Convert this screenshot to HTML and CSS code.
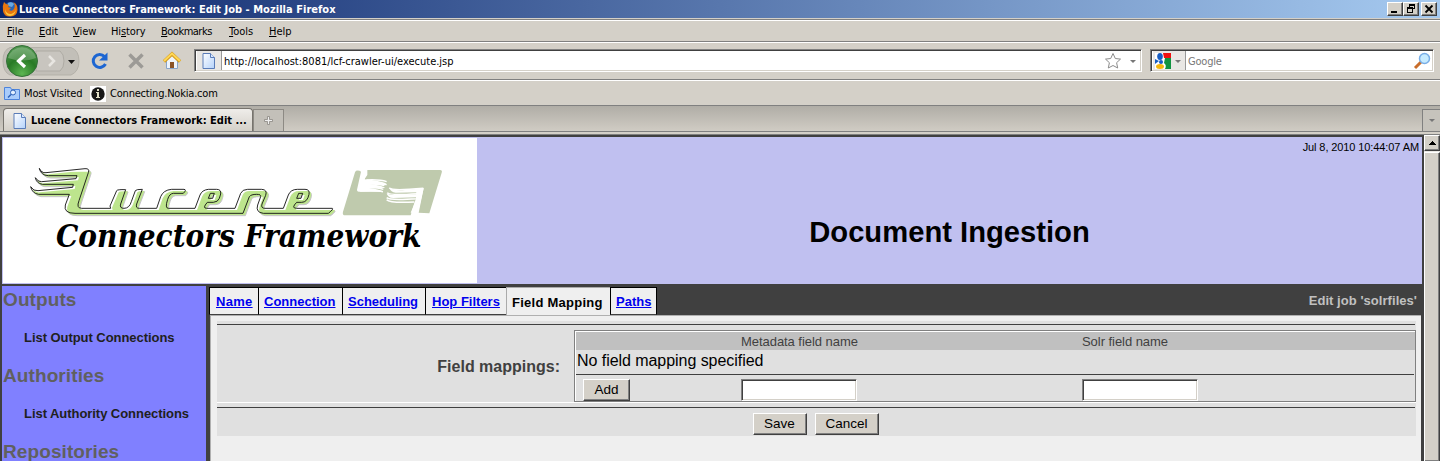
FILE: index.html
```html
<!DOCTYPE html>
<html lang="en">
<head>
<meta charset="utf-8">
<title>Lucene Connectors Framework: Edit Job</title>
<link rel="stylesheet" href="styles.css">
</head>
<body>
<svg width="0" height="0" class="defs">
  <defs>
    <linearGradient id="sheet" x1="0" y1="0" x2="1" y2="1"><stop offset="0" stop-color="#fff"/><stop offset="1" stop-color="#b4d2fa"/></linearGradient>
    <radialGradient id="green" cx=".5" cy=".9" r=".8"><stop offset="0" stop-color="#5cb552"/><stop offset=".6" stop-color="#287a25"/><stop offset="1" stop-color="#4c944a"/></radialGradient>
    <symbol id="page" viewBox="0 0 14 16"><path d="M1 .5h7.500l4 4v11H1z" fill="url(#sheet)" stroke="#5a7cb8"/><path d="M8.500 .5v4h4" fill="#dceaff" stroke="#5a7cb8"/></symbol>
  </defs>
</svg>
<header class="titlebar">
  <svg class="fox" width="16" height="16" viewBox="0 0 16 16"><circle cx="8.500" cy="7.500" r="6.500" fill="#2866b8"/><path d="M6 2q4-2 6 1l-2 3-4-1z" fill="#67a9e4"/><path d="M2 1l2 2 3 1-1 2 3 1-2 2q3 2 5-1 2-4-1-7 5 2 4.500 8T8.500 15.500 1 10Q0 5 2 1z" fill="#e8760e"/><path d="M3 8q1 5 6 5 4-1 5-5-1 7-6 7T3 8z" fill="#fbc53c"/></svg>
  <span class="title-text">Lucene Connectors Framework: Edit Job - Mozilla Firefox</span>
  <div class="winbtns">
    <i><svg width="13" height="11"><path d="M3 8h6v2H3z"/></svg></i>
    <i><svg width="13" height="11"><path d="M5 1h6v5H9V5h1V3H6v1H5zM3 4h6v6H3zM4 6v3h4V6z" fill-rule="evenodd"/></svg></i>
    <i class="close"><svg width="13" height="12"><path d="M3.500 2.500l7 7m0-7l-7 7" stroke="#000" stroke-width="1.800"/></svg></i>
  </div>
</header>
<nav class="menu"><span><u>F</u>ile</span><span class="m2"><u>E</u>dit</span><span class="m3"><u>V</u>iew</span><span class="m4">Hi<u>s</u>tory</span><span class="m5"><u>B</u>ookmarks</span><span class="m6"><u>T</u>ools</span><span><u>H</u>elp</span></nav>
<div class="navbar">
  <svg class="navicons" width="194" height="36" viewBox="0 0 194 36">
    <path d="M10 4.500h61q8 3 8 13.500t-8 14H10Q3 29 3 18t7-13.500z" fill="#c2bfb8" stroke="#b4b1a9"/>
    <path d="M36 8h24q4 3 4 10t-4 10H36z" fill="#c8c5bf" stroke="#aeaba4"/>
    <circle cx="22" cy="18" r="15.500" fill="url(#green)" stroke="#35713a"/>
    <path d="M8 15a14.500 14.500 0 0 1 28 0q-13 5-28 0z" fill="#fff" opacity=".22"/>
    <path d="M25 12l-6.500 6 6.500 6" fill="none" stroke="#fff" stroke-width="3.200"/>
    <path d="M49 13l5 5-5 5" fill="none" stroke="#e8e6e2" stroke-width="2.500"/>
    <path d="M68 17h7l-3.500 4z" fill="#111"/>
    <path d="M104.500 13.500a6.500 6.500 0 1 0 1 7.500" fill="none" stroke="#1d66d2" stroke-width="3"/><path d="M107.500 9.500v8H99z" fill="#1d66d2"/>
    <path d="M129.500 11.500l13 13m0-13l-13 13" stroke="#9c9a96" stroke-width="3.500"/>
    <path d="M166.500 17v8.500h11V17L172 12z" fill="#eef4fb" stroke="#87a4ca"/><path d="M164 18.500l8-7.500 8 7.500" fill="none" stroke="#d29a22" stroke-width="3.500"/><path d="M164 18l8-7.500 8 7.500" fill="none" stroke="#ffd756" stroke-width="2"/><path d="M170 19h4v6h-4z" fill="#8b5427"/>
  </svg>
  <div class="field url"><span class="slot"><svg width="14" height="16"><use href="#page"/></svg></span><span class="addr">http://localhost:8081/lcf-crawler-ui/execute.jsp</span>
    <svg class="star" width="34" height="18"><path d="M9 1.500l2.300 5 5.200.6-3.900 3.600 1.100 5.300L9 13.500 4.300 16l1.100-5.300L1.500 7.100l5.200-.6z" fill="#fff" stroke="#8c8c8c"/><path d="M26 8h6l-3 3z" fill="#777"/></svg></div>
  <div class="field search"><span class="slot engine"><svg width="30" height="18"><path d="M2 1h16v16H2z" fill="#fff"/><path d="M10 1h8v5h-7z" fill="#ef1010"/><path d="M18 6v11h-6q2-4-1-6l1-5z" fill="#109340"/><ellipse cx="7" cy="4.500" rx="2.800" ry="3.500" fill="#155cc3"/><path d="M2 7l4 2-4 3z" fill="#155cc3"/><circle cx="8" cy="10" r="2" fill="#155cc3"/><ellipse cx="7" cy="14.500" rx="4" ry="2.500" fill="#f6b70c"/><path d="M22 8h6l-3 3z" fill="#777"/></svg></span><span class="hint">Google</span>
    <svg class="lens" width="18" height="18"><path d="M2 16l6-6" stroke="#c96d2b" stroke-width="3"/><circle cx="11.500" cy="6.500" r="5" fill="#c6ebff" stroke="#79aee6" stroke-width="1.500"/></svg></div>
</div>
<div class="bookmarks">
  <svg width="16" height="16"><path d="M.5 1.500h6l1 2h8v10H.5z" fill="#a9ccfb" stroke="#4e84da"/><circle cx="9" cy="6.500" r="2.500" fill="#e4f1ff" stroke="#2d61b8"/><path d="M7 8.500l-3 3" stroke="#2d61b8" stroke-width="1.500"/></svg>
  <span class="mv">Most Visited</span>
  <svg width="16" height="16"><path d="M0 0h16v16H0z" fill="#fff"/><circle cx="8" cy="8" r="6.700" fill="#181818"/><path d="M7 3h2v2H7zM6 6h3v5h1v1H6V11h1V7H6z" fill="#e2e0c8"/></svg>
  <span class="nk">Connecting.Nokia.com</span>
</div>
<div class="tabstrip">
  <div class="tab"><svg width="14" height="16"><use href="#page"/></svg><span>Lucene Connectors Framework: Edit ...</span></div>
  <div class="newtab"><svg width="11" height="11"><path d="M4.500 1.500h2v3h3v2h-3v3h-2v-3h-3v-2h3z" fill="#eee" stroke="#8a8781" stroke-width=".8"/></svg></div>
  <div class="alltabs"><svg width="8" height="5"><path d="M1 1h6L4 4z" fill="#777"/></svg></div>
</div>
<div class="viewport">
  <main class="page">
    <div class="banner">
      <div class="logo">
        <svg width="474" height="145" viewBox="9 24 1422 435">
          <defs><path id="word" fill-rule="evenodd" d="M118 115Q124 130 138 128L255 116Q270 115 265 128L237 212Q228 235 245 235H332L330 228L350 182Q352 178 377 179L362 222Q358 235 372 235Q388 235 394 215L406 182Q408 178 427 178L410 222Q406 235 418 235H470L482 200Q490 180 515 178H552Q561 179 550 190H520Q508 191 503 208Q494 235 505 235H585L600 195Q606 180 625 178H650Q664 178 662 192L658 205Q654 216 640 217H622Q606 235 620 235H705L722 190Q727 178 743 178H785Q803 179 797 196L786 222Q782 235 795 235H850L865 195Q872 178 892 178H915Q930 178 927 193Q922 217 905 217H890Q872 235 890 235H997Q1002 237 985 250H790Q766 247 773 225L782 200Q784 193 770 193Q753 193 748 200L729 250H225Q190 250 196 225L208 193H116Q96 190 92 170Q100 184 114 182L218 172L220 163H127Q109 160 106 143Q115 157 125 155L228 146L231 137H145Q122 136 118 115zM625 205L631 190H643L638 205zM890 205L896 190H908L903 205z"/>
          <clipPath id="lower"><path d="M80 125H1010V270H80z"/></clipPath></defs>
          <use href="#word" x="7" y="7" fill="#c6c6c6" stroke="#c6c6c6" stroke-width="3"/>
          <use href="#word" fill="#fff"/>
          <g clip-path="url(#lower)"><use href="#word" x="6" y="5" fill="#bde58d"/></g>
          <use href="#word" fill="none" stroke="#111" stroke-width="2.700"/>
          <path d="M1068 122Q1078 120 1083 125L1072 175Q1068 187 1080 185L1150 185Q1140 177 1102 173L1155 174Q1148 165 1096 162L1160 166Q1166 155 1093 148L1102 135V120H1320Q1328 120 1325 128L1288 250L1256 248L1271 175L1215 180Q1178 183 1168 172Q1173 190 1190 188L1253 187L1252 193L1185 195Q1165 195 1160 188Q1162 203 1180 204L1250 202L1243 219L1232 256H1036Q1026 256 1029 245L1065 127z" fill="#bfcaad"/>
          <path d="M1099 120L1083 183Q1130 181 1149 185M1099 150Q1140 148 1160 155M1097 163Q1135 160 1153 167M1093 173Q1130 171 1150 178M1168 174Q1175 183 1270 175M1162 188Q1168 197 1252 191M1160 203Q1170 212 1250 206L1262 177M1160 209Q1170 220 1243 216" fill="none" stroke="#fff" stroke-width="4.500"/>
          <path d="M1249 176L1271 175L1254 248H1232L1248 210z" fill="#fff"/>
          <text x="168" y="352" class="logo-text" textLength="1096" lengthAdjust="spacingAndGlyphs">Connectors Framework</text>
        </svg>
      </div>
      <div class="heading"><time>Jul 8, 2010 10:44:07 AM</time><h1>Document Ingestion</h1></div>
    </div>
    <div class="columns">
      <aside>
        <h2 class="o">Outputs</h2><a class="lo">List Output Connections</a>
        <h2 class="a">Authorities</h2><a class="la">List Authority Connections</a>
        <h2 class="r">Repositories</h2>
      </aside>
      <section>
        <div class="jobtabs">
          <a class="t1"><span>Name</span></a><a class="t2"><span>Connection</span></a><a class="t3"><span>Scheduling</span></a><a class="t4"><span>Hop Filters</span></a><b class="t5"><span>Field Mapping</span></b><a class="t6"><span>Paths</span></a>
          <span class="jobname">Edit job 'solrfiles'</span>
        </div>
        <div class="form">
          <div class="rule"></div>
          <div class="row">
            <label>Field mappings:</label>
            <div class="mapping">
              <div class="mhead"><span class="c2">Metadata field name</span><span class="c3">Solr field name</span></div>
              <div class="none"><span>No field mapping specified</span></div>
              <div class="mline"></div>
              <div class="madd"><button class="add">Add</button><input class="i2"><input class="i3"></div>
            </div>
          </div>
          <div class="actions"><div class="rule"></div><div class="btns"><button class="save">Save</button><button class="cancel">Cancel</button></div></div>
        </div>
      </section>
    </div>
  </main>
  <div class="scroll"><div class="up"><svg width="7" height="4"><path d="M3 0h1v1h1v1h1v1h1v1H0V3h1V2h1V1h1z"/></svg></div><div class="thumb"></div></div>
</div>
</body>
</html>
```
FILE: styles.css
```css
*{box-sizing:border-box}
body{margin:0;width:1440px;height:461px;overflow:hidden;background:#d4d0c8;font:11px/14px "DejaVu Sans Condensed","DejaVu Sans",sans-serif;font-stretch:condensed;color:#000;display:flex;flex-direction:column}
.defs{position:absolute}
svg{display:block;flex:none}
span,time,h1,h2,label,button{white-space:nowrap}
.titlebar{height:18px;flex:none;background:linear-gradient(90deg,#0a246a,#a6caf0);display:flex;align-items:center;padding:0 3px 0 2px}
.title-text{color:#fff;font-weight:bold;margin-left:1px;padding-top:2px;letter-spacing:.03px;flex:1}
.winbtns{display:flex}
.winbtns i{width:16px;height:14px;background:#d4d0c8;border:1px solid;border-color:#fff #404040 #404040 #fff;box-shadow:inset -1px -1px #808080}
.winbtns .close{margin-left:2px}
.menu{height:23px;flex:none;margin-top:1px;border-top:1px solid #808080;border-bottom:1px solid #808080;box-shadow:inset 0 1px #fff,0 1px #fff;display:flex;padding:5px 7px}
.menu span{height:14px;width:32px}
.menu .m2{width:34px}.menu .m3{width:38px}.menu .m4{width:50px;letter-spacing:-.1px}.menu .m5{width:68px;letter-spacing:-.5px}.menu .m6{width:40px}
.navbar{height:38px;flex:none;display:flex;align-items:center;border-bottom:1px solid #808080;box-shadow:0 1px #fff;padding-right:6px}
.field{height:23px;background:#fff;border:1px solid;border-color:#808080 #fff #fff #808080;box-shadow:inset 1px 1px #404040,inset -1px -1px #d4d0c8;display:flex;align-items:center;padding:2px}
.url{width:948px}
.search{width:284px;margin-left:8px}
.slot{background:#e9e7e4;border-right:1px solid #999;height:19px;width:25px;display:flex;align-items:center;justify-content:center}
.engine{width:33px;justify-content:flex-start}
.addr{margin-left:2px;padding-top:2px;flex:1}
.hint{color:#777;margin-left:2px;padding-top:2px;letter-spacing:-.2px;flex:1}
.star{margin-right:1px}
.bookmarks{height:26px;flex:none;display:flex;align-items:center;border-bottom:1px solid #808080;padding:2px 0 0 4px}
.mv{width:58px;margin:0 8px 0 4px;letter-spacing:-.15px}
.nk{margin-left:4px;letter-spacing:-.2px}
.tabstrip{height:26px;flex:none;background:linear-gradient(#b0ada6,#d0ccc4);display:flex;border-bottom:1px solid #808080;padding-left:3px}
.tab{width:250px;margin-top:2px;border:1px solid #77746e;border-bottom:0;border-radius:4px 4px 0 0;background:linear-gradient(#efedea,#d4d0c8);display:flex;align-items:center;padding:2px 0 0 9px;font-weight:bold}
.tab span{margin-left:4px}
.newtab{width:31px;margin-top:3px;border:1px solid #8d8a84;border-bottom:0;background:#c3c0b9;display:flex;align-items:center;justify-content:center}
.alltabs{width:18px;margin:3px 0 0 auto;border:1px solid #808080;border-width:1px 0 0 1px;background:#c6c3bc;display:flex;align-items:center;justify-content:center}
.viewport{flex:1;min-height:0;margin-top:2px;border-top:1px solid #808080;display:flex;font-family:"Liberation Sans",Arial,sans-serif}
.page{width:1424px;background:#404040;padding:2px 2px 0;overflow:hidden}
.banner{height:147px;background:#c0c0f0;padding:1px 0 1px 1px;display:flex}
.logo{width:474px;background:#fff}
.logo-text{font:italic bold 96px "DejaVu Serif Condensed","DejaVu Serif",serif}
.heading{flex:1;display:flex;flex-direction:column}
time{font-size:11px;letter-spacing:-.1px;text-align:right;padding:2px 3px 0 0}
h1{font-size:29.2px;line-height:36px;margin:60px 0 0;text-align:center}
.columns{display:flex;padding-top:2px;height:180px}
aside{width:204px;background:#8080ff;display:flex;flex-direction:column;flex:none}
h2{margin:0 0 0 1px;font-size:19px;letter-spacing:.1px;line-height:28px;height:26px;color:#606060}
aside a{font-size:13px;letter-spacing:-.05px;font-weight:bold;line-height:20px;height:20px;margin:16px 0 14px 22px;color:#202020}
section{flex:1;margin-left:3px;padding-top:1px;min-width:0}
.jobtabs{display:flex;height:28px;font-size:13px;font-weight:bold;line-height:27px}
.jobtabs a,.jobtabs b{background:#efefef;border-top:1px solid #000;border-left:1px solid #000;border-bottom:1px solid #404040;padding-left:6px;color:#00e}
.jobtabs a span{text-decoration:underline}
.jobtabs .t1{letter-spacing:.3px}
.jobtabs .t2,.jobtabs .t3,.jobtabs .t6{padding-left:5px}
.jobtabs .t5{border-top:1px solid #aaa;border-left:1px solid #aaa;border-bottom:0;color:#000;padding-left:5px;line-height:29px;letter-spacing:.26px}
.t1{width:49px}.t2{width:84px}.t3{width:83px}.t4{width:81px}.t5{width:104px}.t6{width:47px;border-right:1px solid #000}
.jobname{margin-left:auto;padding-right:5px;letter-spacing:.05px;color:#c0c0c0}
.form{margin:0 1px 0 1px;background:#efefef;border:1px solid #b0b0b0;border-width:1px 0 0 1px;height:150px;padding:5px 5px 0 6px}
.form>.rule{height:9px;background:#e0e0e0;padding-top:3px}
.rule:before{content:"";display:block;height:1px;background:#404040;margin-right:1px}
.row{display:flex;background:#e0e0e0;height:73px;border-bottom:1px solid #fff}
label{width:357px;text-align:right;padding:27px 14px 0 0;font-size:16px;line-height:20px;font-weight:bold;color:#404040}
.mapping{width:842px;height:72px;border:1px solid #808080;box-shadow:inset 1px 1px #fff;padding:1px 0 0 1px}
.mhead{height:18px;background:#c0c0c0;display:flex;font-size:13px;letter-spacing:-.05px;line-height:20px;color:#404040;padding-left:165px}
.c2{width:341px}
.none{height:24px;font-size:16px;letter-spacing:-.05px;line-height:21px;padding-left:1px}
.mline{height:1px;background:#404040;margin-right:1px}
.madd{display:flex;padding:4px 0 0 7px}
button{height:22px;padding:0;background:#d4d0c8;border:1px solid;border-color:#fff #404040 #404040 #fff;border-radius:0;box-shadow:inset -1px -1px #808080;font:13.5px/20px "Liberation Sans",Arial,sans-serif;color:#000}
input{width:116px;height:22px;border:1px solid;border-color:#808080 #fff #fff #808080;box-shadow:inset 1px 1px #404040,inset -1px -1px #d4d0c8;background:#fff;padding:0;border-radius:0}
.add{width:47px}.i2{margin-left:111px}.i3{margin-left:225px}
.actions{background:#e0e0e0;height:33px;padding-top:4px}
.btns{display:flex;gap:8px;justify-content:center;padding:5px 2px 0 0}
.save{width:54px}.cancel{width:64px}
.scroll{width:16px;background:#eae8e4;display:flex;flex-direction:column}
.up,.thumb{background:#d4d0c8;border:1px solid;border-color:#fff #404040 #404040 #fff;box-shadow:inset -1px -1px #808080}
.up{height:16px;display:flex;align-items:center;justify-content:center}
.thumb{flex:1;margin-top:1px;border-bottom:0}
```
